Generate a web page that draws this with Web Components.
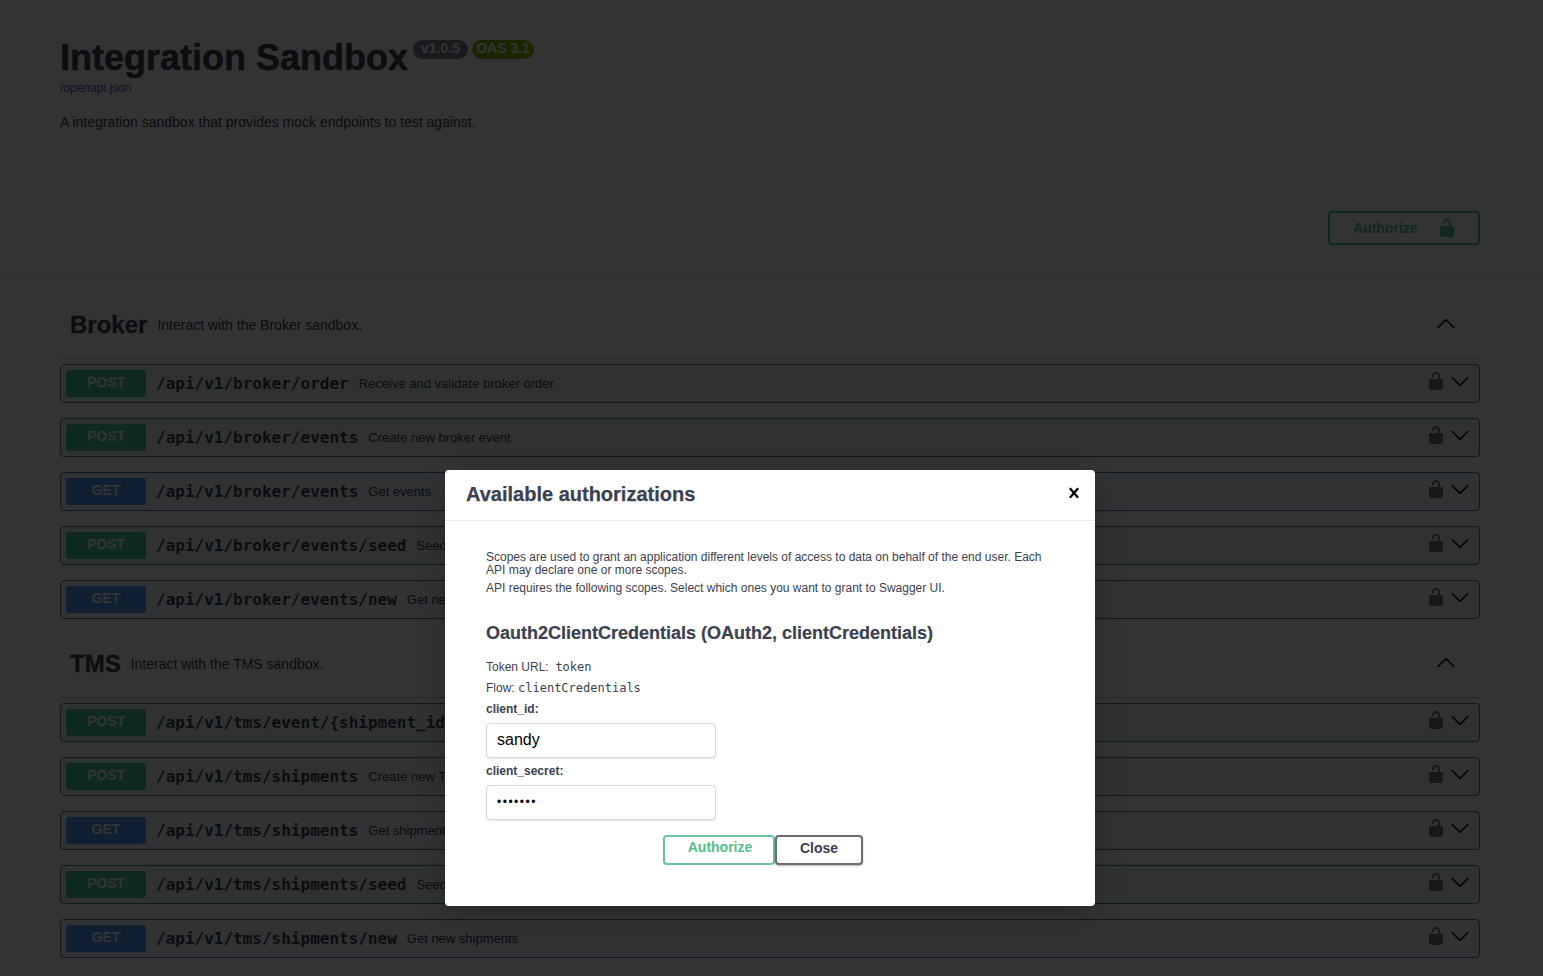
<!DOCTYPE html>
<html lang="en"><head><meta charset="utf-8"><title>Integration Sandbox</title>
<style>
html,body{margin:0;height:976px;overflow:hidden;background:#fff;font-family:"Liberation Sans",Arial,sans-serif;color:#3b4151}
</style></head><body>
<sw-page>
  <sw-info slot="info"></sw-info>
  <sw-section name="Broker" desc="Interact with the Broker sandbox.">
    <sw-op method="POST" path="/api/v1/broker/order" desc="Receive and validate broker order."></sw-op>
    <sw-op method="POST" path="/api/v1/broker/events" desc="Create new broker event"></sw-op>
    <sw-op method="GET" path="/api/v1/broker/events" desc="Get events"></sw-op>
    <sw-op method="POST" path="/api/v1/broker/events/seed" desc="Seed new broker events"></sw-op>
    <sw-op method="GET" path="/api/v1/broker/events/new" desc="Get new broker events"></sw-op>
  </sw-section>
  <sw-section name="TMS" desc="Interact with the TMS sandbox.">
    <sw-op method="POST" path="/api/v1/tms/event/{shipment_id}" desc=""></sw-op>
    <sw-op method="POST" path="/api/v1/tms/shipments" desc="Create new TMS"></sw-op>
    <sw-op method="GET" path="/api/v1/tms/shipments" desc="Get shipments"></sw-op>
    <sw-op method="POST" path="/api/v1/tms/shipments/seed" desc="Seed new shipments"></sw-op>
    <sw-op method="GET" path="/api/v1/tms/shipments/new" desc="Get new shipments"></sw-op>
  </sw-section>
</sw-page>
<sw-dialog></sw-dialog>
<script>
const ICON={
 unlocked:'M15.8 8H14V5.6C14 2.703 12.665 1 10 1 7.334 1 6 2.703 6 5.6V6h2v-.801C8 3.754 8.797 3 10 3c1.203 0 2 .754 2 2.199V8H4c-.553 0-1 .646-1 1.199V17c0 .549.428 1.139.951 1.307l1.197.387C5.672 18.861 6.55 19 7.1 19h5.8c.549 0 1.428-.139 1.951-.307l1.196-.387c.524-.167.953-.757.953-1.306V9.199C17 8.646 16.352 8 15.8 8z',
 down:'M17.418 6.109c.272-.268.709-.268.979 0s.271.701 0 .969l-7.908 7.83c-.27.268-.707.268-.979 0l-7.908-7.83c-.27-.268-.27-.701 0-.969.271-.268.709-.268.979 0L10 13.25l7.418-7.141z',
 up:'M17.418 14.908c.272.268.709.268.979 0s.271-.701 0-.969l-7.908-7.83c-.27-.268-.707-.268-.979 0l-7.908 7.83c-.27.268-.27.701 0 .969.271.268.709.268.979 0L10 7.767l7.418 7.141z',
 close:'M14.348 14.849c-.469.469-1.229.469-1.697 0L10 11.819l-2.651 3.029c-.469.469-1.229.469-1.697 0-.469-.469-.469-1.229 0-1.697l2.758-3.15-2.759-3.152c-.469-.469-.469-1.228 0-1.697s1.228-.469 1.697 0L10 8.183l2.651-3.031c.469-.469 1.228-.469 1.697 0s.469 1.229 0 1.697l-2.758 3.152 2.758 3.15c.469.469.469 1.229 0 1.698z'
};
const svg=(n,w,h,c,cl='')=>`<svg class="${cl}" width="${w}" height="${h}" viewBox="0 0 20 20" fill="${c}" aria-hidden="true"><path d="${ICON[n]}"/></svg>`;
class Base extends HTMLElement{
  render(html){this.attachShadow({mode:'open'}).innerHTML=html}
}
customElements.define('sw-page',class extends Base{connectedCallback(){this.render(`<style>
:host{display:block}
.top{padding:0 63px 0 60px;height:275px;border-bottom:1px solid #e6e6e6;box-sizing:content-box;display:flex;flex-direction:column}
.sections{padding:25px 63px 0 60px}
</style><div class="top"><slot name="info"></slot></div><div class="sections"><slot></slot></div>`)}});
customElements.define('sw-info',class extends Base{connectedCallback(){this.render(`<style>
:host{display:flex;flex-direction:column;flex:1}
.hd{display:flex;align-items:flex-start;padding-top:37px;height:42px}
h1{margin:0;font-size:36px;line-height:42px;font-weight:700;color:#3b4151;-webkit-text-stroke:.5px #3b4151}
.badge{margin:3px 0 0 4px;height:19px;line-height:17px;border-radius:57px;font-size:14px;font-weight:700;color:#fff;text-align:center;box-sizing:border-box}
.badge.v{background:#7d8492;margin-left:5px;width:55px}
.badge.o{background:#89bf04;width:62px}
a{display:block;font-size:12px;line-height:14px;color:#4060c8;margin-top:2px;text-decoration:none}
p{margin:19px 0 0;font-size:14px;line-height:16px;color:#3b4151}
.auth{margin-top:auto;align-self:flex-end;margin-bottom:30px;width:152px;height:34px;box-sizing:border-box;border:2px solid #49cc90;border-radius:4px;background:transparent;display:flex;align-items:center;justify-content:flex-start;padding:0 0 0 23px;font:700 14px "Liberation Sans",sans-serif;color:#49cc90}
.auth svg{margin-left:19px}
</style>
<div class="hd"><h1>Integration Sandbox</h1><span class="badge v">v1.0.5</span><span class="badge o">OAS 3.1</span></div>
<a href="#">/openapi.json</a>
<p>A integration sandbox that provides mock endpoints to test against.</p>
<div class="auth"><span>Authorize</span>${svg('unlocked',20,20,'#49cc90')}</div>`)}});
customElements.define('sw-section',class extends Base{connectedCallback(){this.render(`<style>
:host{display:block;margin-bottom:21px}
.h{display:flex;align-items:center;padding:10px 24px 19px 10px;border-bottom:1px solid rgba(59,65,81,.3);margin-bottom:5px}
h3{margin:0;font-size:24px;line-height:28px;font-weight:700;color:#3b4151;-webkit-text-stroke:.3px #3b4151}
small{font-size:14px;margin-left:10px;color:#3b4151}
svg{margin-left:auto;margin-top:-4px}
</style><div class="h"><h3>${this.getAttribute('name')}</h3><small>${this.getAttribute('desc')}</small>${svg('up',20,20,'#000')}</div><slot></slot>`)}});
customElements.define('sw-op',class extends Base{connectedCallback(){const g=this.getAttribute('method')==='GET';const c=g?'#5199f4':'#49cc90';const bd=g?'#4a76a8':'#3c8f6c';const bg=g?'rgba(97,175,254,.1)':'rgba(73,204,144,.1)';const desc=this.getAttribute('desc');this.render(`<style>
:host{display:flex;align-items:center;height:39px;box-sizing:border-box;border:1px solid ${bd};border-radius:4px;background:${bg};margin-bottom:15px;padding:0 9px 0 5px}
.m{width:80px;height:27px;background:${c};border-radius:3px;color:#fff;font:700 14px/24px "Liberation Sans",sans-serif;text-align:center;flex:none}
.p{font:700 16px/20px "DejaVu Sans Mono",monospace;color:#3b4151;margin-left:10px;white-space:nowrap}
.d{font-size:13px;color:#3b4151;margin-left:10px;white-space:nowrap}
.r{margin-left:auto;display:flex;align-items:center;margin-top:-5px}
.r svg+svg{margin-left:4px}
.lk{opacity:.5}
</style><span class="m">${this.getAttribute('method')}</span><span class="p">${this.getAttribute('path')}</span>${desc?`<span class="d">${desc}</span>`:''}<span class="r">${svg('unlocked',20,20,'#000','lk')}${svg('down',20,20,'#000')}</span>`)}});
customElements.define('sw-dialog',class extends Base{connectedCallback(){this.render(`<style>
:host{position:absolute;inset:0;background:rgba(0,0,0,.8);display:flex;flex-direction:column;align-items:center;padding:470px 3px 0 0;box-sizing:border-box}
.m{width:650px;height:436px;background:#fff;border-radius:4px;box-shadow:0 10px 30px rgba(0,0,0,.2);box-sizing:border-box}
.t{display:flex;align-items:center;justify-content:space-between;height:51px;box-sizing:border-box;border-bottom:1px solid #ebebeb;padding:0 11px 0 21px}
.t svg{margin-bottom:4px}
h3{margin:0 0 2px;font-size:20px;line-height:24px;font-weight:700;color:#3b4151;-webkit-text-stroke:.25px #3b4151}
.b{padding:30px 41px 0;font-size:12px;color:#3b4151}
p{margin:0;line-height:13px}
.p2{margin-top:4px;line-height:14px}
h4{margin:26px 0 0;font-size:18px;line-height:24px;font-weight:700;color:#3b4151;-webkit-text-stroke:.2px #3b4151}
.l{line-height:14px}
code{font:12px "DejaVu Sans Mono",monospace;color:#3b4151}
label{display:block;font-weight:700;line-height:14px}
input{display:block;box-sizing:border-box;width:230px;height:35px;margin:7px 0 6px;padding:0 10px 2px;border:1px solid #d9d9d9;border-radius:4px;background:#fff;font:16px "Liberation Sans",sans-serif;color:#000;box-shadow:0 1px 2px rgba(0,0,0,.1);outline:none}
input[type=password]{font-size:12px;letter-spacing:1.5px}
.a{display:flex;justify-content:center;margin-top:15px;padding-right:14px}
button{box-sizing:border-box;height:30px;border-radius:4px;background:#fff;border:2px solid;font:700 14px "Liberation Sans",sans-serif;padding:0}
.go{width:112px;border-color:#6cc29d;color:#55c08e;padding:0 0 7px 2px}
.cl{width:88px;color:#3b4151;box-shadow:0 1px 2px rgba(0,0,0,.3);padding-bottom:5px;border-color:#6b6b70}
</style>
<div class="m"><div class="t"><h3>Available authorizations</h3>${svg('close',20,20,'#000')}</div>
<div class="b"><p>Scopes are used to grant an application different levels of access to data on behalf of the end user. Each API may declare one or more scopes.</p>
<p class="p2">API requires the following scopes. Select which ones you want to grant to Swagger UI.</p>
<h4>Oauth2ClientCredentials (OAuth2, clientCredentials)</h4>
<div class="l" style="margin-top:15px">Token URL:&nbsp; <code>token</code></div>
<div class="l" style="margin-top:7px">Flow: <code>clientCredentials</code></div>
<label style="margin-top:7px">client_id:</label><input type="text" value="sandy">
<label>client_secret:</label><input type="password" value="secret1">
<div class="a"><button class="go">Authorize</button><button class="cl">Close</button></div>
</div></div>`)}});
</script>
</body></html>
